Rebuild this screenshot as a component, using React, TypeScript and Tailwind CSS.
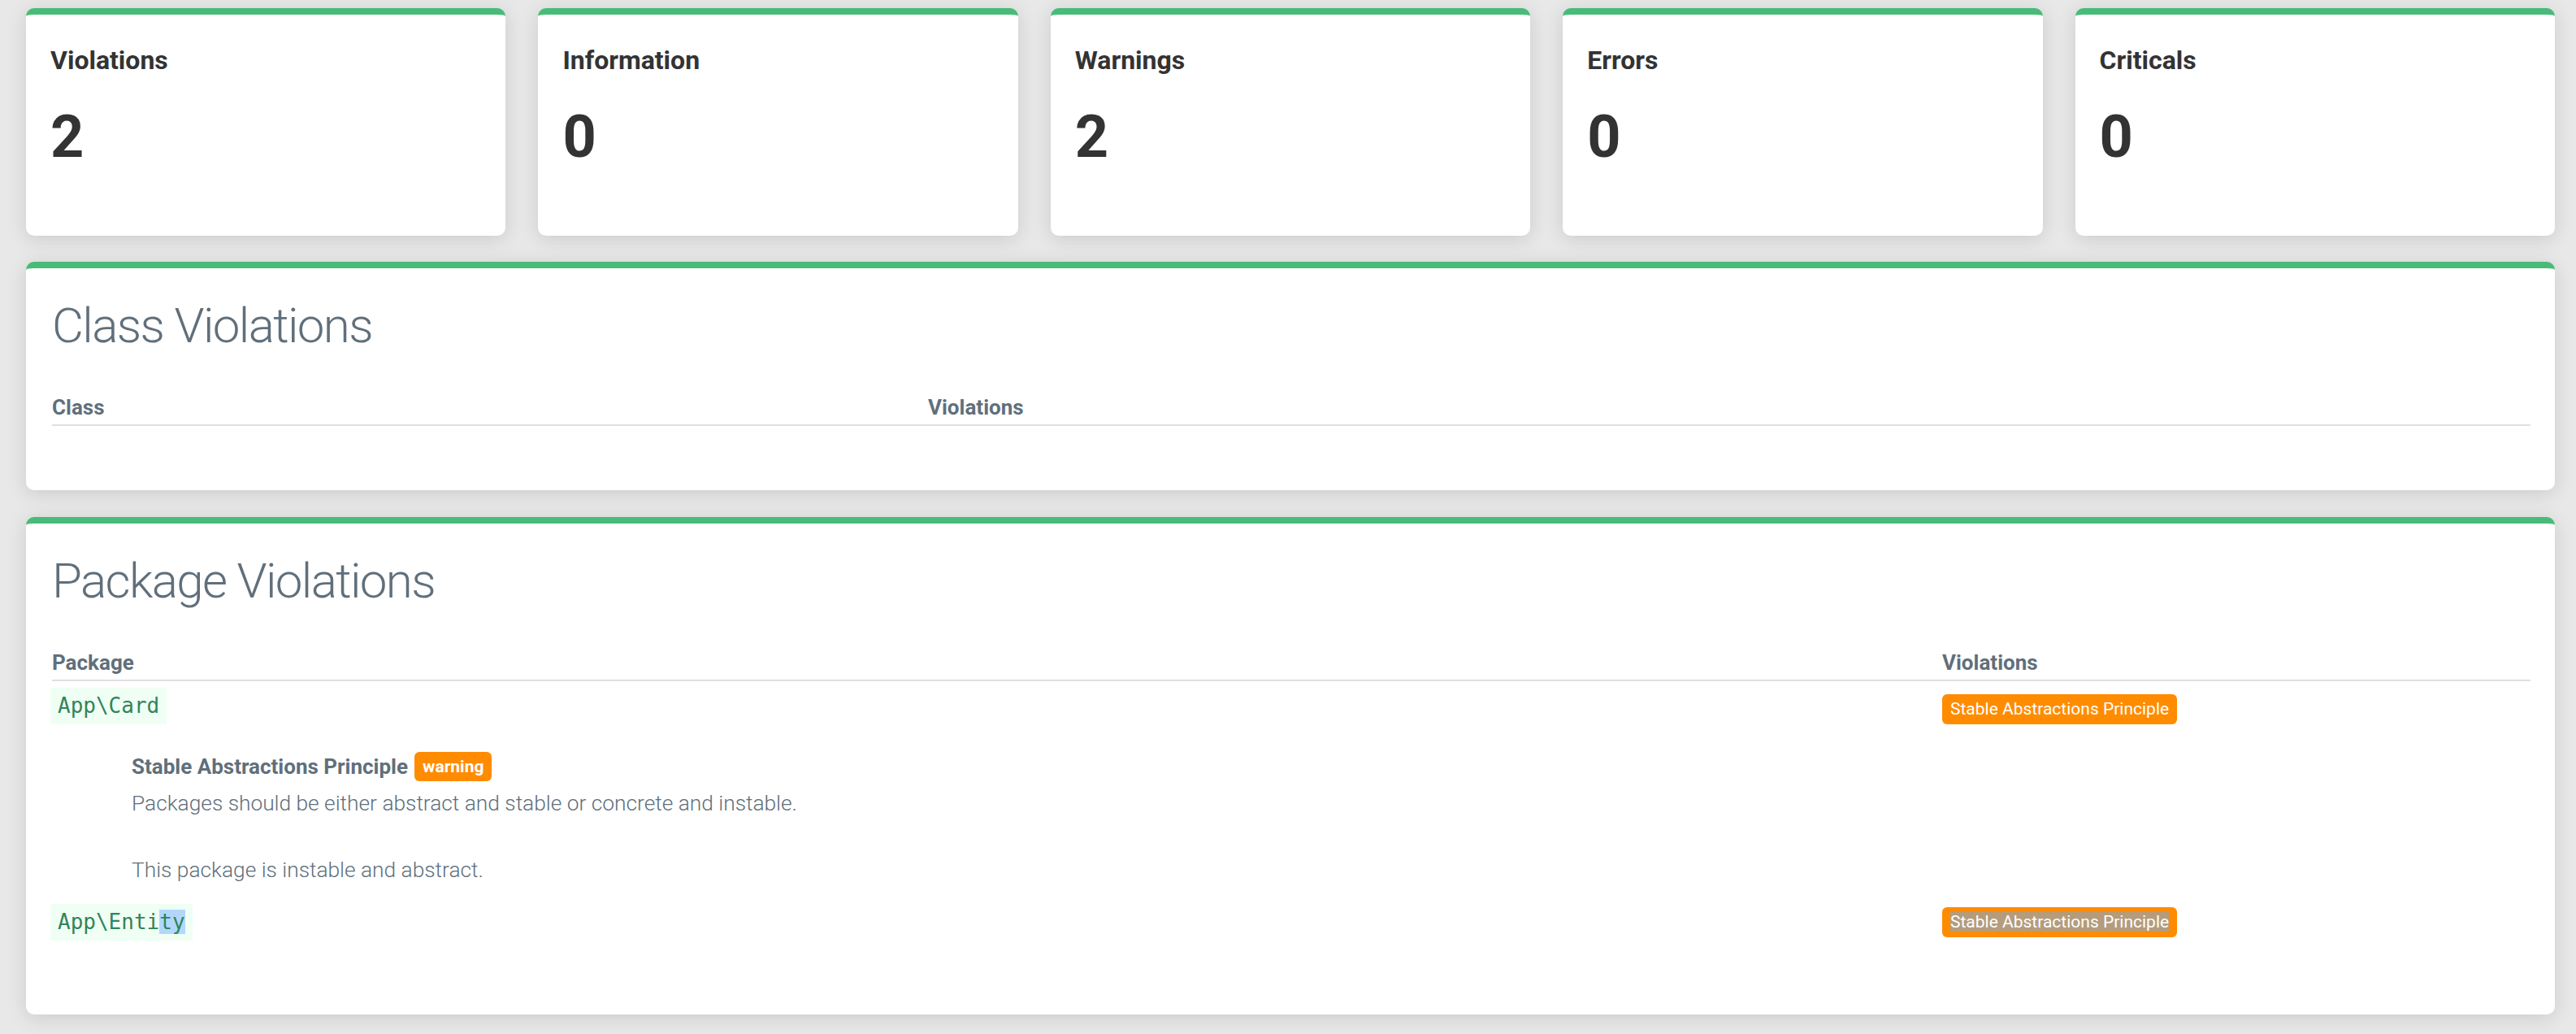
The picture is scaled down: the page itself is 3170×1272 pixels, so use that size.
import React from 'react';

const stats: [string, number][] = [
  ['Violations', 2],
  ['Information', 0],
  ['Warnings', 2],
  ['Errors', 0],
  ['Criticals', 0],
];

const card =
  'bg-white rounded-[10px] border-t-[8px] border-[#48bb78] shadow-[0_4px_24px_rgba(0,0,0,0.13)]';

const Badge: React.FC<{ selected?: boolean; className?: string }> = ({ selected, className }) => (
  <span
    className={`inline-block rounded-[6px] bg-[#ff8c00] px-[10px] text-[21px] leading-[37px] text-white whitespace-nowrap ${className ?? ''}`}
  >
    {selected ? <span className="bg-[#b49c7c]">Stable Abstractions Principle</span> : 'Stable Abstractions Principle'}
  </span>
);

const Code: React.FC<{ children: React.ReactNode }> = ({ children }) => (
  <code className="inline-block bg-[#f0fff4] px-[9px] py-[7px] font-['DejaVu_Sans_Mono',monospace] text-[26px] leading-[31px] text-[#2f855a]">
    {children}
  </code>
);

const App: React.FC = () => {
  return (
    <div className="min-h-screen bg-[#e8e8e8] pl-[32px] pr-[26px] pt-[10px] pb-[24px] font-['Roboto',sans-serif]">
      {/* Stat cards */}
      <div className="grid grid-cols-5 gap-x-[40px]">
        {stats.map(([label, value]) => (
          <div key={label} className={`${card} h-[280px] pl-[30px] pt-[37px] text-[#333333]`}>
            <div className="text-[32px] font-bold leading-[38px]">{label}</div>
            <div className="mt-[33px] text-[72px] font-bold leading-[86px]">{value}</div>
          </div>
        ))}
      </div>

      {/* Class Violations */}
      <div className={`${card} mt-[32px] pl-[32px] pr-[30px] pt-[34px] pb-[79px] text-[#606f7b]`}>
        <h2 className="text-[60px] font-light leading-[74px] tracking-[-1.6px]">Class Violations</h2>
        <div className="mt-[48px] grid grid-cols-[1078px_1fr] border-b-2 border-[#e0e0e0] pb-[6px] text-[26px] font-bold leading-[30px]">
          <div>Class</div>
          <div>Violations</div>
        </div>
      </div>

      {/* Package Violations */}
      <div className={`${card} mt-[33px] pl-[32px] pr-[30px] pt-[34px] pb-[91px] text-[#606f7b]`}>
        <h2 className="text-[60px] font-light leading-[74px] tracking-[-1.6px]">Package Violations</h2>
        <div className="mt-[48px] grid grid-cols-[2326px_1fr] border-b-2 border-[#e0e0e0] pb-[6px] text-[26px] font-bold leading-[30px]">
          <div>Package</div>
          <div>Violations</div>
        </div>

        <div className="grid grid-cols-[2326px_1fr] pt-[8px]">
          <div className="-ml-[2px]">
            <Code>App\Card</Code>
          </div>
          <div>
            <Badge className="mt-[8px]" />
          </div>
        </div>

        <div className="pl-[98px]">
          <div className="mt-[34px] flex items-center gap-[8px]">
            <span className="text-[26px] font-bold leading-[30px]">Stable Abstractions Principle</span>
            <span className="rounded-[6px] bg-[#ff8c00] px-[10px] text-[21px] font-bold leading-[36px] text-white">warning</span>
          </div>
          <p className="mt-[7px] text-[26.3px] font-light leading-[41px]">
            Packages should be either abstract and stable or concrete and instable.
            <br />
            <br />
            This package is instable and abstract.
          </p>
        </div>

        <div className="mt-[21px] grid grid-cols-[2326px_1fr]">
          <div className="-ml-[2px]">
            <Code>
              App\Enti<span className="bg-[#b3d7fb]">ty</span>
            </Code>
          </div>
          <div>
            <Badge selected className="mt-[4px]" />
          </div>
        </div>
      </div>
    </div>
  );
};

export default App;
